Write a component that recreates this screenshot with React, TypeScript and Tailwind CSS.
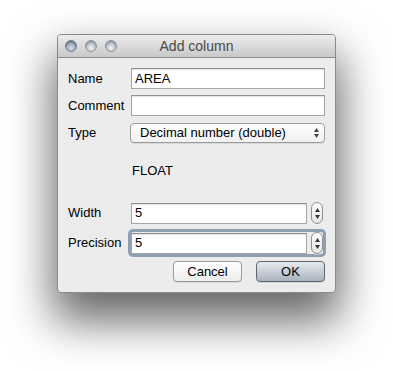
import React from "react";

function TextField({ value }: { value?: string }) {
  return (
    <div className="flex h-[21px] flex-1 items-center border border-[#a5a5a5] border-t-[#8e8e8e] bg-white pl-[3px] text-[13px] text-black shadow-[inset_0_1px_1px_rgba(0,0,0,0.12)]">
      {value}
    </div>
  );
}

function Stepper() {
  return (
    <div className="ml-[4px] flex h-[22px] w-[12px] flex-col items-center justify-center gap-[3px] rounded-[6px] border border-[#8f8f8f] bg-gradient-to-b from-white to-[#e6e6e6] shadow-[0_1px_0_rgba(255,255,255,0.6)]">
      <svg width="5" height="4" viewBox="0 0 5 4">
        <path d="M2.5 0L5 4H0z" fill="#333" />
      </svg>
      <svg width="5" height="4" viewBox="0 0 5 4">
        <path d="M0 0h5L2.5 4z" fill="#333" />
      </svg>
    </div>
  );
}

function Light({ dark }: { dark?: boolean }) {
  return (
    <div
      className={
        dark
          ? "h-[12px] w-[12px] rounded-full border border-[#6f7c8b] bg-[radial-gradient(circle_at_50%_70%,#d7e0ea,#8795a6_70%)] shadow-[inset_0_1px_1px_rgba(0,0,0,0.3)]"
          : "h-[12px] w-[12px] rounded-full border border-[#8b929a] bg-[radial-gradient(circle_at_50%_70%,#f4f6f8,#aab2bb_70%)] shadow-[inset_0_1px_1px_rgba(0,0,0,0.2)]"
      }
    />
  );
}

export default function App() {
  return (
    <div
      className="h-[371px] w-[393px] bg-white pl-[57px] pt-[34px]"
      style={{ fontFamily: '"Liberation Sans", Arial, sans-serif' }}
    >
      <div className="flex w-[279px] flex-col overflow-hidden rounded-[4px] border border-[#8a8a8a] bg-[#ececec] shadow-[0_24px_45px_4px_rgba(0,0,0,0.6)]">
        {/* title bar */}
        <div className="relative flex h-[23px] items-center border-b border-[#8c8c8c] bg-gradient-to-b from-[#ececec] to-[#c9c9c9] pl-[7px]">
          <div className="flex gap-[8px]">
            <Light dark />
            <Light />
            <Light />
          </div>
          <div className="absolute inset-0 flex items-center justify-center text-[14px] text-[#4a4a4a]">
            Add column
          </div>
        </div>

        {/* body */}
        <div className="flex flex-col px-[10px] pb-[10px] pt-[10px] text-[13px] text-black">
          <div className="flex h-[21px] items-center">
            <div className="w-[63px]">Name</div>
            <TextField value="AREA" />
          </div>
          <div className="mt-[6px] flex h-[21px] items-center">
            <div className="w-[63px]">Comment</div>
            <TextField />
          </div>
          <div className="mt-[7px] flex h-[20px] items-center">
            <div className="w-[62px]">Type</div>
            <div className="flex h-[20px] flex-1 items-center justify-between rounded-[4px] border border-[#9c9c9c] bg-gradient-to-b from-white to-[#f0f0f0] pl-[9px] pr-[5px] shadow-[0_1px_0_rgba(0,0,0,0.08)]">
              <span>Decimal number (double)</span>
              <div className="flex flex-col gap-[2px]">
                <svg width="5" height="4" viewBox="0 0 5 4">
                  <path d="M2.5 0L5 4H0z" fill="#444" />
                </svg>
                <svg width="5" height="4" viewBox="0 0 5 4">
                  <path d="M0 0h5L2.5 4z" fill="#444" />
                </svg>
              </div>
            </div>
          </div>
          <div className="mt-[20px] h-[16px] pl-[64px] leading-[16px]">FLOAT</div>
          <div className="mt-[23px] flex h-[22px] items-center pr-[2px]">
            <div className="w-[63px]">Width</div>
            <TextField value="5" />
            <Stepper />
          </div>
          <div className="mt-[8px] flex h-[22px] items-center pr-[2px]">
            <div className="w-[63px]">Precision</div>
            <div className="flex flex-1 items-center rounded-[2px] ring-[3px] ring-[#8e9fb3]">
              <TextField value="5" />
              <Stepper />
            </div>
          </div>
          <div className="mt-[7px] flex h-[21px] justify-end gap-[14px]">
            <div className="flex w-[69px] items-center justify-center rounded-[4px] border border-[#9a9a9a] bg-gradient-to-b from-white to-[#ededed] shadow-[0_1px_0_rgba(0,0,0,0.08)]">
              Cancel
            </div>
            <div className="flex w-[69px] items-center justify-center rounded-[4px] border border-[#5e6670] bg-gradient-to-b from-[#e6eaef] to-[#a9b3bf] shadow-[0_1px_0_rgba(0,0,0,0.1)]">
              OK
            </div>
          </div>
        </div>
      </div>
    </div>
  );
}
